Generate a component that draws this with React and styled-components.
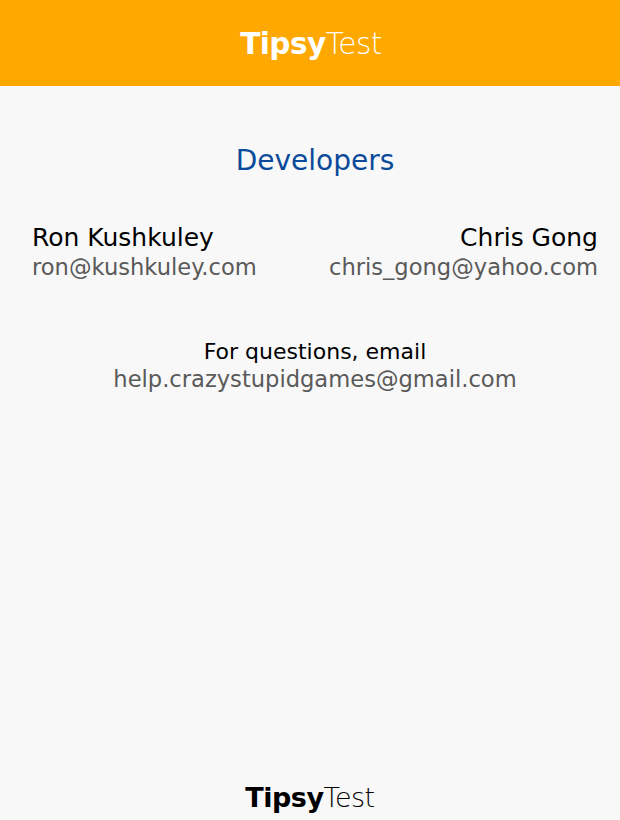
import React from "react";
import styled, { createGlobalStyle } from "styled-components";

const Global = createGlobalStyle`
  html, body { margin: 0; padding: 0; background: #f8f8f8; }
  body { font-family: "DejaVu Sans", sans-serif; }
`;

const Page = styled.div`
  width: 620px;
  height: 820px;
  display: flex;
  flex-direction: column;
  background: #f8f8f8;
  overflow: hidden;
`;

const Header = styled.header`
  height: 86px;
  box-sizing: border-box;
  padding-top: 4px;
  background: #ffa800;
  display: flex;
  align-items: center;
  justify-content: center;
  flex-shrink: 0;
`;

const Brand = styled.div`
  font-size: ${(p) => p.size}px;
  color: ${(p) => p.color};
  line-height: 1;
  letter-spacing: -0.5px;
  margin-left: ${(p) => p.shift || 0}px;
`;

const Bold = styled.span`
  font-weight: 700;
`;

const Light = styled.span`
  font-weight: 300;
`;

const Main = styled.main`
  flex: 1;
  display: flex;
  flex-direction: column;
  align-items: stretch;
  padding: 59px 22px 0 32px;
`;

const Title = styled.h1`
  margin: 0;
  text-align: center;
  font-weight: 400;
  font-size: 28px;
  color: #0b4a9a;
  line-height: 32px;
`;

const Devs = styled.div`
  display: flex;
  justify-content: space-between;
  margin-top: 46px;
`;

const Dev = styled.div`
  display: flex;
  flex-direction: column;
  align-items: ${(p) => (p.right ? "flex-end" : "flex-start")};
`;

const Name = styled.div`
  font-size: 25px;
  color: #000;
  line-height: 30px;
`;

const Email = styled.div`
  font-size: 22.6px;
  color: #5a5a5a;
  line-height: 29px;
`;

const Contact = styled.div`
  margin-top: 56px;
  display: flex;
  flex-direction: column;
  align-items: center;
`;

const Prompt = styled.div`
  font-size: 22px;
  color: #000;
  line-height: 27px;
`;

const Footer = styled.footer`
  height: 46px;
  display: flex;
  align-items: center;
  justify-content: center;
  flex-shrink: 0;
`;

export default function App() {
  return (
    <>
      <Global />
      <Page>
        <Header>
          <Brand size={29.5} color="#fff" shift={2}>
            <Bold>Tipsy</Bold>
            <Light>Test</Light>
          </Brand>
        </Header>
        <Main>
          <Title>Developers</Title>
          <Devs>
            <Dev>
              <Name>Ron Kushkuley</Name>
              <Email>ron@kushkuley.com</Email>
            </Dev>
            <Dev right>
              <Name>Chris Gong</Name>
              <Email>chris_gong@yahoo.com</Email>
            </Dev>
          </Devs>
          <Contact>
            <Prompt>For questions, email</Prompt>
            <Email>help.crazystupidgames@gmail.com</Email>
          </Contact>
        </Main>
        <Footer>
          <Brand size={27} color="#000">
            <Bold>Tipsy</Bold>
            <Light>Test</Light>
          </Brand>
        </Footer>
      </Page>
    </>
  );
}
